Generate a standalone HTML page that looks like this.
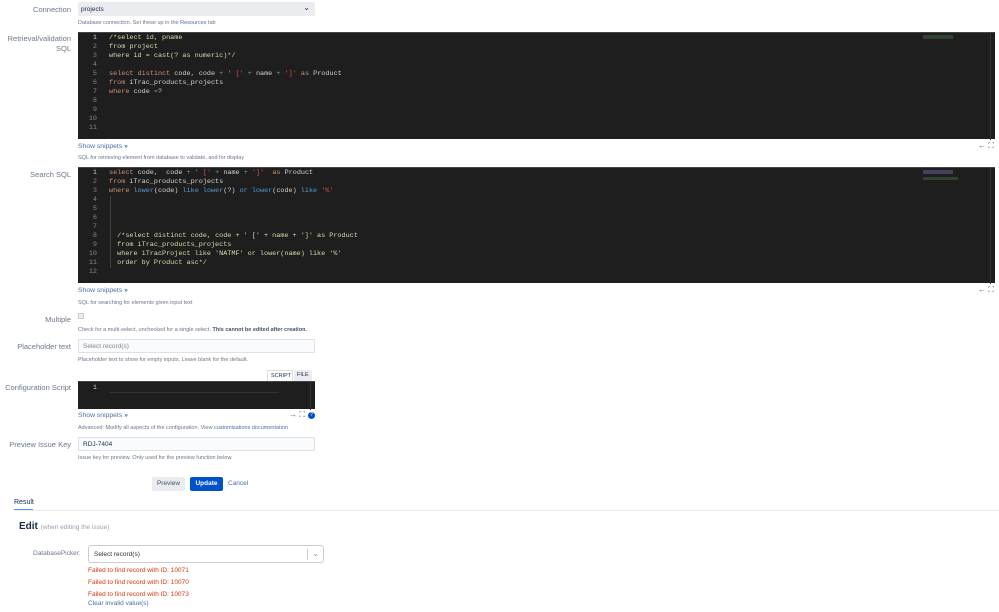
<!DOCTYPE html>
<html><head><style>
*{margin:0;padding:0;box-sizing:border-box}
body{width:999px;height:612px;background:#fff;font-family:"Liberation Sans",sans-serif;color:#172b4d;position:relative;overflow:hidden}
.a{position:absolute;white-space:nowrap}
.lbl{position:absolute;right:928px;font-size:7.5px;color:#6b778c;text-align:right}
.help{position:absolute;left:78px;font-size:5.5px;color:#6b778c}
.ed{position:absolute;background:#1e1e1e;border-top:1px solid #444}
.ln{position:absolute;left:0;width:19px;text-align:right;font-family:"Liberation Mono",monospace;font-size:6.8px;color:#858585}
.cd{position:absolute;left:31px;font-family:"Liberation Mono",monospace;font-size:6.8px;color:#d4d4d4;white-space:pre}
.k{color:#569cd6}.s{color:#ce9178}.r{color:#f44747}.c{color:#6a9955}.y{color:#dcdcaa}.p{color:#c586c0}.w{color:#9cdcfe}
.snip{position:absolute;left:78px;font-size:6.8px;color:#4a6ea8}
.inp{position:absolute;left:78px;width:237px;height:14px;border:1px solid #dfe1e6;background:#fafbfc;font-size:6.5px;padding:3px 4px;color:#7a869a}
.err{position:absolute;left:88px;font-size:6.5px;color:#de350b}
.ico{position:absolute;font-size:8px;color:#4a6ea8}
</style></head><body>
<div class="lbl" style="top:5px">Connection</div>
<div class="a" style="left:78px;top:2px;width:237px;height:14px;background:#ebecf0;border-radius:2px;font-size:6.5px;padding:4px 3px;color:#172b4d">projects<span style="position:absolute;right:5px;top:1px;font-size:8px">&#8964;</span></div>
<div class="help" style="top:20px">Database connection. Set these up in the <span style="color:#4a6ea8">Resources</span> tab</div>

<div class="lbl" style="top:34px;line-height:10px">Retrieval/validation<br>SQL</div>
<div class="ed" style="left:78px;top:32px;width:917px;height:107px">
<div class="ln" style="top:1px;line-height:9px;color:#c6c6c6">1</div>
<div class="ln" style="top:10px;line-height:9px">2<br>3<br>4<br>5<br>6<br>7<br>8<br>9<br>10<br>11</div>
<div class="cd" style="top:1px;line-height:9px"><span class="y">/*select id, pname
from project
where id = cast(? as numeric)*/</span>

<span class="s">select distinct</span> code, code <span class="k">+</span> <span class="s">' </span><span class="r">['</span> <span class="k">+</span> name <span class="k">+</span> <span class="r">']'</span> <span class="s">as</span> Product
<span class="s">from</span> iTrac_products_projects
<span class="s">where</span> code <span class="k">=</span>?</div>
<div class="a" style="left:845px;top:2px;width:30px;height:4px;background:#3a5a3a;opacity:.6"></div>
<div class="a" style="right:4px;top:0;width:1px;height:107px;background:#333"></div>
</div>
<div class="snip" style="top:143px">Show snippets <b>&#187;</b></div>
<div class="ico" style="left:978px;top:141px">&#8592; &#x26F6;</div>
<div class="help" style="top:155px">SQL for retrieving element from database to validate, and for display</div>

<div class="lbl" style="top:170px">Search SQL</div>
<div class="ed" style="left:78px;top:167px;width:917px;height:116px">
<div class="ln" style="top:1px;line-height:9px;color:#c6c6c6">1</div>
<div class="ln" style="top:10px;line-height:9px">2<br>3<br>4<br>5<br>6<br>7<br>8<br>9<br>10<br>11<br>12</div>
<div class="cd" style="top:1px;line-height:9px"><span class="s">select</span> code,  code <span class="k">+</span> <span class="s">' </span><span class="r">['</span> <span class="k">+</span> name <span class="k">+</span> <span class="r">']'</span>  <span class="s">as</span> Product
<span class="s">from</span> iTrac_products_projects
<span class="s">where</span> <span class="k">lower</span>(code) <span class="k">like lower</span>(?) <span class="k">or lower</span>(code) <span class="k">like</span> <span class="r">'%'</span>




  <span class="y">/*select distinct code, code + ' [' + name + ']' as Product
  from iTrac_products_projects
  where iTracProject like 'NATMF' or lower(name) like '%'
  order by Product asc*/</span>
</div>
<div class="a" style="left:32px;top:28px;width:1px;height:72px;background:#404040"></div>
<div class="a" style="left:845px;top:2px;width:30px;height:4px;background:#5a5a8a;opacity:.6"></div>
<div class="a" style="left:845px;top:9px;width:35px;height:3px;background:#3a5a3a;opacity:.6"></div>
<div class="a" style="right:4px;top:0;width:1px;height:116px;background:#333"></div>
</div>
<div class="snip" style="top:287px">Show snippets <b>&#187;</b></div>
<div class="ico" style="left:978px;top:285px">&#8592; &#x26F6;</div>
<div class="help" style="top:300px">SQL for searching for elements given input text</div>

<div class="lbl" style="top:315px">Multiple</div>
<div class="a" style="left:78px;top:313px;width:6px;height:6px;border:1px solid #ccc;background:#eee"></div>
<div class="help" style="top:327px">Check for a multi-select, unchecked for a single select. <b style="color:#42526e">This cannot be edited after creation.</b></div>

<div class="lbl" style="top:342px">Placeholder text</div>
<div class="inp" style="top:339px">Select record(s)</div>
<div class="help" style="top:357px">Placeholder text to show for empty inputs. Leave blank for the default.</div>

<div class="a" style="left:267px;top:370px;width:26px;height:11px;border:1px solid #ddd;border-bottom:none;font-size:5.5px;padding:2px 3px;background:#fff">SCRIPT</div>
<div class="a" style="left:294px;top:370px;width:18px;height:11px;background:#ebecf0;font-size:5.5px;padding:2px 3px">FILE</div>
<div class="lbl" style="top:383px">Configuration Script</div>
<div class="ed" style="left:78px;top:381px;width:237px;height:28px">
<div class="ln" style="top:2px;color:#c6c6c6">1</div>
<div class="a" style="left:31px;top:1px;width:170px;height:10px;border-bottom:1px solid #333"></div>
<div class="a" style="right:4px;top:0;width:1px;height:28px;background:#333"></div>
</div>
<div class="snip" style="top:412px">Show snippets <b>&#187;</b></div>
<div class="ico" style="left:289px;top:410px">&#8594; &#x26F6;</div>
<div class="a" style="left:308px;top:412px;width:7px;height:7px;border-radius:50%;background:#0052cc;color:#fff;font-size:5px;text-align:center;line-height:7px">?</div>
<div class="help" style="top:425px">Advanced: Modify all aspects of the configuration. View <span style="color:#4a6ea8">customisations documentation</span></div>

<div class="lbl" style="top:440px">Preview Issue Key</div>
<div class="inp" style="top:437px;color:#172b4d">RDJ-7404</div>
<div class="help" style="top:455px">Issue key for preview. Only used for the preview function below.</div>

<div class="a" style="left:152px;top:477px;width:33px;height:14px;background:#ebecf0;border-radius:2px;font-size:6.5px;text-align:center;line-height:14px;color:#42526e">Preview</div>
<div class="a" style="left:190px;top:477px;width:33px;height:14px;background:#0052cc;border-radius:2px;font-size:6.5px;font-weight:bold;text-align:center;line-height:14px;color:#fff">Update</div>
<div class="a" style="left:228px;top:480px;font-size:6.5px;color:#4a6ea8">Cancel</div>

<div class="a" style="left:14px;top:499px;font-size:7px;color:#172b4d">Result</div>
<div class="a" style="left:14px;top:509px;width:19px;height:2px;background:#4c9aff"></div>
<div class="a" style="left:14px;top:510px;width:985px;height:1px;background:#ebecf0"></div>

<div class="a" style="left:19px;top:521px;font-size:10px;font-weight:bold">Edit <span style="font-size:6.5px;font-weight:normal;color:#97a0af">(when editing the issue)</span></div>
<div class="a" style="left:33px;top:550px;font-size:6.5px;color:#6b778c">DatabasePicker:</div>
<div class="a" style="left:88px;top:545px;width:236px;height:18px;border:1px solid #ccc;border-radius:3px;font-size:6.5px;padding:5px 5px;color:#333">Select record(s)<span style="position:absolute;left:218px;top:3px;width:1px;height:11px;background:#ccc"></span><span style="position:absolute;right:4px;top:3px;font-size:8px;color:#999">&#8964;</span></div>
<div class="err" style="top:567px">Failed to find record with ID: 10071</div>
<div class="err" style="top:579px">Failed to find record with ID: 10070</div>
<div class="err" style="top:591px">Failed to find record with ID: 10073</div>
<div class="a" style="left:88px;top:600px;font-size:6.5px;color:#4a6ea8">Clear invalid value(s)</div>
</body></html>
